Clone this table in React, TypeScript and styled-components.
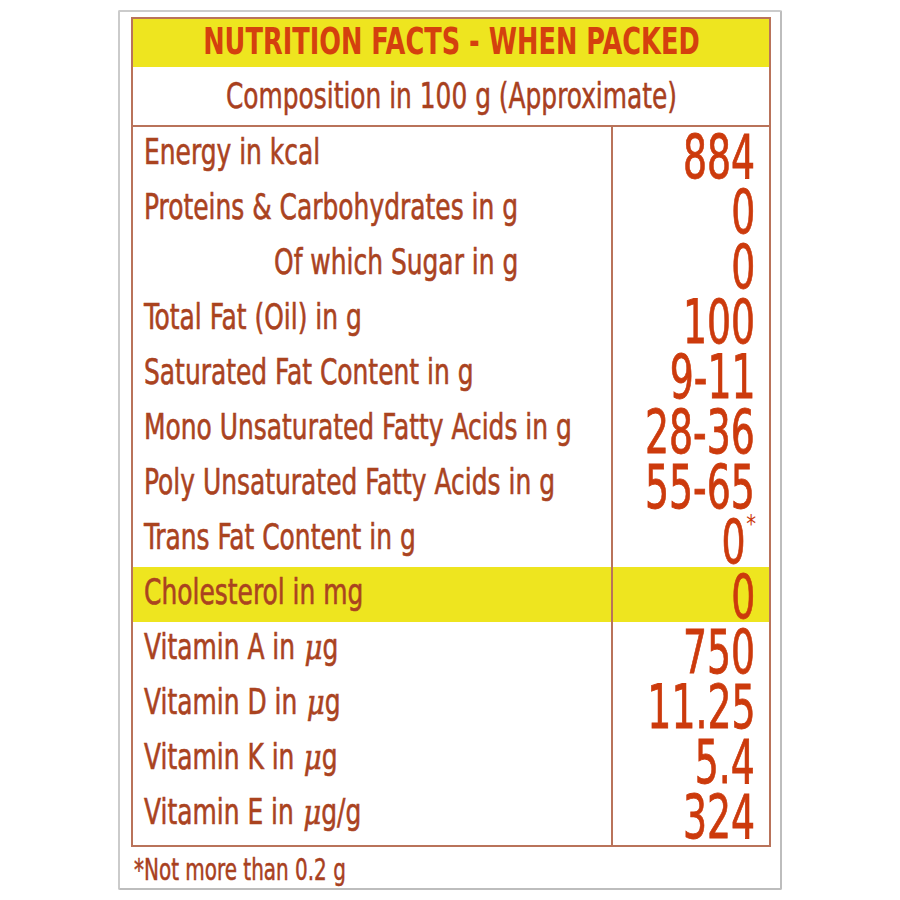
import React from "react";
import styled, { createGlobalStyle } from "styled-components";

const GlobalStyle = createGlobalStyle`
  html, body {
    margin: 0;
    padding: 0;
    background: #ffffff;
  }
  body {
    font-family: "DejaVu Sans Condensed", "DejaVu Sans", sans-serif;
  }
`;

type Row = {
  label: React.ReactNode;
  value: string;
  indent?: boolean;
  highlight?: boolean;
  note?: boolean;
};

const Mu = () => <MuGlyph>μ</MuGlyph>;

const rows: Row[] = [
  { label: "Energy in kcal", value: "884" },
  { label: "Proteins & Carbohydrates in g", value: "0" },
  { label: "Of which Sugar in g", value: "0", indent: true },
  { label: "Total Fat (Oil) in g", value: "100" },
  { label: "Saturated Fat Content in g", value: "9-11" },
  { label: "Mono Unsaturated Fatty Acids in g", value: "28-36" },
  { label: "Poly Unsaturated Fatty Acids in g", value: "55-65" },
  { label: "Trans Fat Content in g", value: "0", note: true },
  { label: "Cholesterol in mg", value: "0", highlight: true },
  { label: <>Vitamin A in <Mu />g</>, value: "750" },
  { label: <>Vitamin D in <Mu />g</>, value: "11.25" },
  { label: <>Vitamin K in <Mu />g</>, value: "5.4" },
  { label: <>Vitamin E in <Mu />g/g</>, value: "324" },
];

const App = () => {
  return (
    <>
      <GlobalStyle />
      <Frame>
        <Table>
          <Title>
            <Squeeze $x={0.77} $origin="center">NUTRITION FACTS - WHEN PACKED</Squeeze>
          </Title>
          <Subtitle>
            <Squeeze $x={0.79} $origin="center">Composition in 100 g (Approximate)</Squeeze>
          </Subtitle>
          <Body>
            {rows.map((row, i) => (
              <Line key={i} $highlight={row.highlight}>
                <Label $indent={row.indent}>
                  <Squeeze $x={0.77} $origin="left">{row.label}</Squeeze>
                </Label>
                <Value>
                  <Squeeze $x={0.7} $origin="right">
                    {row.value}
                    {row.note && <Star>*</Star>}
                  </Squeeze>
                </Value>
              </Line>
            ))}
          </Body>
        </Table>
        <Footnote>
          <Squeeze $x={0.74} $origin="left">*Not more than 0.2 g</Squeeze>
        </Footnote>
      </Frame>
    </>
  );
};

export default App;

const Frame = styled.div`
  box-sizing: border-box;
  width: 664px;
  height: 880px;
  margin: 10px auto 0;
  padding: 5px 9px 0 11px;
  border: 2px solid #cbcbcb;
  border-right-color: #bdbdbd;
  border-bottom-color: #bdbdbd;
  border-radius: 2px;
  background: #ffffff;
  display: flex;
  flex-direction: column;
`;

const Table = styled.div`
  box-sizing: border-box;
  flex-shrink: 0;
  width: 640px;
  border: 2px solid #b9735a;
  overflow: hidden;
  display: flex;
  flex-direction: column;
`;

const Squeeze = styled.span<{ $x: number; $origin: string }>`
  display: inline-block;
  flex-shrink: 0;
  white-space: nowrap;
  transform: scaleX(${(p) => p.$x});
  transform-origin: ${(p) => p.$origin} center;
`;

const Title = styled.div`
  height: 48px;
  padding-bottom: 3px;
  box-sizing: border-box;
  background: #eee51f;
  color: #d4400e;
  font-weight: bold;
  font-size: 37px;
  line-height: 1;
  display: flex;
  align-items: center;
  justify-content: center;
  white-space: nowrap;
`;

const Subtitle = styled.div`
  height: 58px;
  border-bottom: 2px solid #b9735a;
  color: #a8401e;
  font-size: 35px;
  line-height: 1;
  -webkit-text-stroke: 0.5px currentColor;
  display: flex;
  align-items: center;
  justify-content: center;
  white-space: nowrap;
`;

const Body = styled.div`
  display: flex;
  flex-direction: column;
`;

const Line = styled.div<{ $highlight?: boolean }>`
  display: grid;
  grid-template-columns: 480px minmax(0, 1fr);
  grid-template-rows: 100%;
  height: 55px;
  flex-shrink: 0;
  background: ${(p) => (p.$highlight ? "#eee51f" : "transparent")};

  &:last-child {
    height: 58px;
  }
`;

const Label = styled.div<{ $indent?: boolean }>`
  box-sizing: border-box;
  display: flex;
  align-items: center;
  padding-left: ${(p) => (p.$indent ? "141px" : "11px")};
  padding-bottom: 6px;
  border-right: 2px solid #b9735a;
  color: #aa431f;
  font-size: 36px;
  line-height: 1;
  -webkit-text-stroke: 0.6px currentColor;
  white-space: nowrap;

  ${Line}:last-child & {
    padding-bottom: 9px;
  }
`;

const Value = styled.div`
  box-sizing: border-box;
  display: flex;
  align-items: center;
  justify-content: flex-end;
  padding: 4px 14px 0 0;
  color: #cc3a0c;
  font-size: 60px;
  line-height: 1;
  -webkit-text-stroke: 0.8px currentColor;

  ${Line}:last-child & {
    padding-bottom: 3px;
  }
`;

const Star = styled.span`
  display: inline-block;
  margin-left: 3px;
  font-size: 24px;
  vertical-align: top;
  -webkit-text-stroke: 0;
  transform: scaleX(1.3);
`;

const MuGlyph = styled.span`
  font-family: "DejaVu Serif", "Liberation Serif", serif;
  font-style: italic;
  margin-left: 2px;
`;

const Footnote = styled.div`
  margin-top: 8px;
  padding-left: 3px;
  color: #a8401e;
  font-size: 30px;
  line-height: 1;
  -webkit-text-stroke: 0.5px currentColor;
`;
